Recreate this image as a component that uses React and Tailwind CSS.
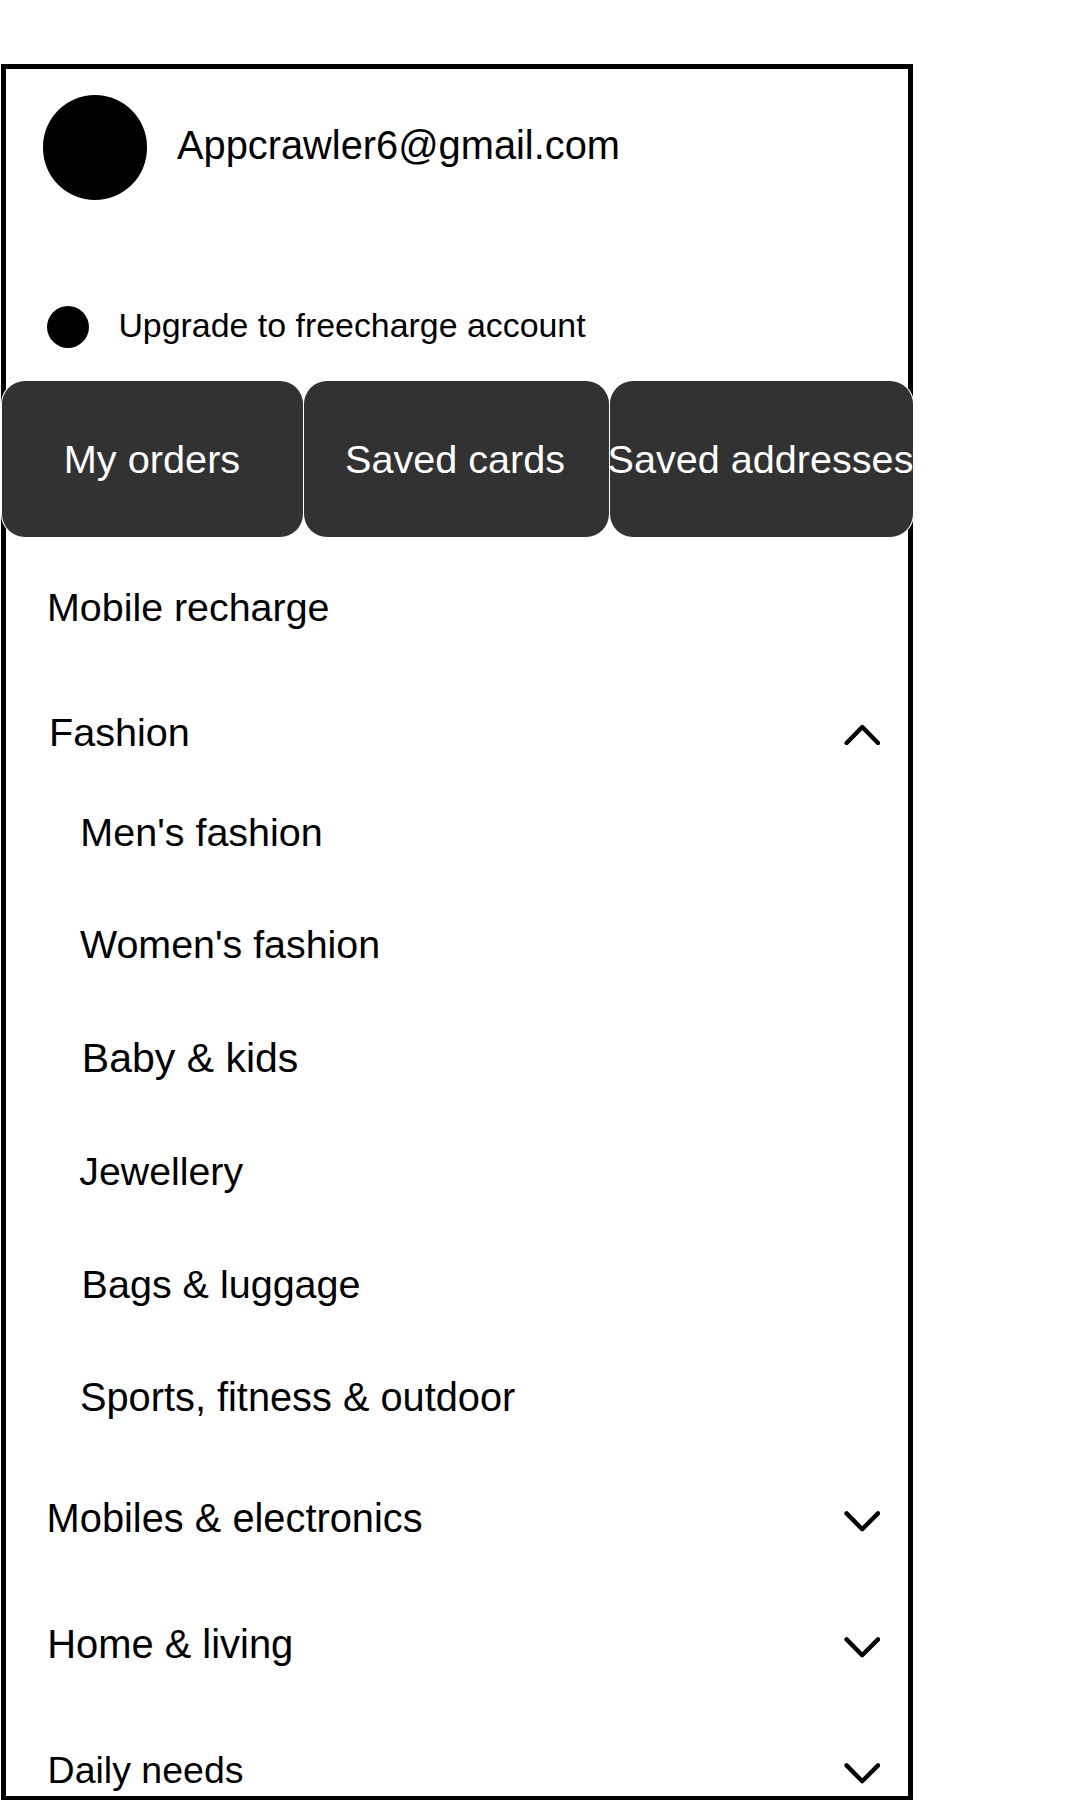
import React from "react";

function Chevron({ up }) {
  return (
    <svg
      width="36"
      height="21"
      viewBox="0 0 36 21"
      fill="none"
      stroke="black"
      strokeWidth="4.4"
      strokeLinecap="round"
      strokeLinejoin="round"
      className={up ? "mt-[12px] shrink-0" : "mt-[13px] shrink-0"}
    >
      <path d={up ? "M2.6 19L18.3 3L34 19" : "M2.6 2.4L18.2 18.2L34 2.4"} />
    </svg>
  );
}

const actions = [
  { label: "My orders", className: "w-[301px] pr-px text-[39.7px]" },
  { label: "Saved cards", className: "w-[305px] pr-[3px] text-[39.6px]" },
  { label: "Saved addresses", className: "w-[303px] pr-[2px] text-[39.6px]" },
];

const rows = [
  { label: "Mobile recharge", className: "mt-[50px] pl-[41px] text-[39.4px]" },
  { label: "Fashion", className: "mt-[85px] pl-[43px] text-[39.6px]", chevron: "up" },
  { label: "Men's fashion", className: "mt-[60px] pl-[74.3px] text-[39.5px]" },
  { label: "Women's fashion", className: "mt-[72px] pl-[74px] text-[39.4px]" },
  { label: "Baby & kids", className: "mt-[74px] pl-[75.8px] text-[41px]" },
  { label: "Jewellery", className: "mt-[73px] pl-[73.3px] text-[39.3px]" },
  { label: "Bags & luggage", className: "mt-[73px] pl-[75.6px] text-[39.5px]" },
  { label: "Sports, fitness & outdoor", className: "mt-[73px] pl-[74px] text-[39.75px]" },
  { label: "Mobiles & electronics", className: "mt-[81px] pl-[40.6px] text-[39.8px]", chevron: "down" },
  { label: "Home & living", className: "mt-[86px] pl-[41.2px] text-[39.9px]", chevron: "down" },
  { label: "Daily needs", className: "mt-[86px] pl-[41.6px] text-[37.5px]", chevron: "down" },
];

export default function App() {
  return (
    <div className="h-[1800px] w-[1080px] overflow-hidden bg-white pt-[64px] pl-px font-['Liberation_Sans',Arial,sans-serif] whitespace-nowrap text-black">
      <aside className="h-[1736px] w-[912px] border-[5px] border-b-4 border-black pt-[26px]">
        <header className="flex h-[105px] items-start pl-[37px]">
          <div className="h-[105px] w-[104px] rounded-full bg-black" />
          <div className="mt-[30px] ml-[30px] text-[39.8px] leading-[40px]">Appcrawler6@gmail.com</div>
        </header>

        <div className="mt-[104px] flex h-[44px] items-start pl-[41px]">
          <div className="mt-[2px] size-[42px] rounded-full bg-black" />
          <div className="mt-px ml-[29.4px] text-[33.9px] leading-[40px]">Upgrade to freecharge account</div>
        </div>

        <div className="-mr-[5px] -ml-[4px] mt-[33px] flex gap-px">
          {actions.map((a) => (
            <button
              key={a.label}
              className={`relative flex h-[156px] shrink-0 items-center justify-center rounded-[23px] bg-[#323232] leading-[40px] text-white ring-1 ring-white ${a.className}`}
            >
              {a.label}
            </button>
          ))}
        </div>

        <nav>
          {rows.map((r) => (
            <div
              key={r.label}
              className={`flex h-[40px] items-start justify-between pr-[28px] leading-[40px] ${r.className}`}
            >
              <span>{r.label}</span>
              {r.chevron && <Chevron up={r.chevron === "up"} />}
            </div>
          ))}
        </nav>
      </aside>
    </div>
  );
}
